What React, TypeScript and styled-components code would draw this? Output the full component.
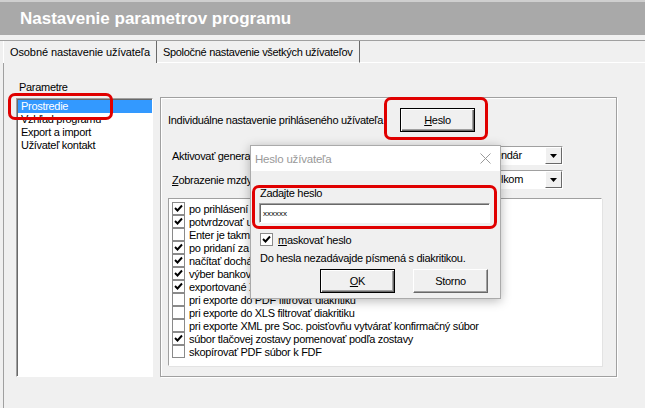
import React from 'react'
import styled, { createGlobalStyle, css } from 'styled-components'

const GlobalStyle = createGlobalStyle`
  html, body {
    margin: 0;
    padding: 0;
    background: #f0f0f0;
  }

  body {
    font-family: "Liberation Sans", Arial, sans-serif;
    font-size: 11px;
    letter-spacing: -0.3px;
    color: #000;
  }
`

const Page = styled.div`
  position: relative;
  width: 645px;
  height: 408px;
  overflow: hidden;
  background: #f0f0f0;
`

const Header = styled.div`
  height: 33px;
  border-top: 2px solid #cfcfcf;
  background: #a9a9a9;
  display: flex;
  align-items: center;
  padding-left: 20px;
`

const Title = styled.h1`
  margin: 0;
  font-family: "Liberation Sans", Arial, sans-serif;
  font-size: 17px;
  font-weight: 700;
  letter-spacing: 0;
  color: #fff;
`

const TabStrip = styled.div`
  display: flex;
  margin-top: 5px;
  height: 22px;
  border-top: 1px solid #a0a0a0;
  padding-left: 3px;
`

const Tab = styled.div<{ active?: boolean }>`
  height: 22px;
  line-height: 22px;
  padding: 0 6px;
  letter-spacing: -0.1px;
  border-left: 1px solid #fff;
  border-right: 1px solid #696969;
  white-space: nowrap;
  ${(p) => !p.active && css`
    letter-spacing: -0.3px;
    border-left: none;
    border-bottom: 1px solid #fff;
    height: 21px;
  `}
`

const TabFill = styled.div`
  flex: 1;
  border-bottom: 1px solid #fff;
`

const Panel = styled.div`
  display: flex;
  margin-left: 3px;
  height: 345px;
  border-left: 1px solid #a0a0a0;
`

const LeftCol = styled.div`
  padding: 18px 0 0 12px;
`

const Caption = styled.div`
  line-height: 13px;
  padding-left: 3px;
  margin-bottom: 4px;
`

const ListBox = styled.div`
  width: 135px;
  height: 276px;
  background: #fff;
  border: 1px solid;
  border-color: #a0a0a0 #fff #fff #a0a0a0;
  box-shadow: inset 1px 1px 0 #696969;
  padding-top: 1px;
`

const ListItem = styled.div<{ selected?: boolean }>`
  line-height: 13px;
  padding-left: 3px;
  margin-left: 1px;
  ${(p) => p.selected && css`
    background: #3399ff;
    color: #fff;
  `}
`

const GroupBox = styled.div`
  margin: 34px 0 0 7px;
  width: 436px;
  height: 268px;
  padding: 10px 12px 0 7px;
  border: 1px solid #a0a0a0;
  box-shadow: 1px 1px 0 #fff, inset 1px 1px 0 #fff;
`

const UserRow = styled.div`
  display: flex;
  align-items: center;
  height: 24px;
`

const UserLabel = styled.span`
  width: 232px;
`

const WinButton = styled.button<{ primary?: boolean }>`
  width: 75px;
  height: 24px;
  padding: 0;
  font: inherit;
  letter-spacing: inherit;
  color: #000;
  background: #f0f0f0;
  border: 1px solid #fff;
  border-right-color: #696969;
  border-bottom-color: #696969;
  box-shadow: inset -1px -1px 0 #a0a0a0;
  ${(p) => p.primary && css`
    border: 1px solid #000;
    box-shadow: inset 1px 1px 0 #fff, inset -1px -1px 0 #696969, inset -2px -2px 0 #a0a0a0;
  `}
`

const FieldRow = styled.div<{ gap: number }>`
  display: flex;
  align-items: center;
  height: 19px;
  margin-top: ${(p) => p.gap}px;
  padding-left: 4px;
`

const FieldLabel = styled.span`
  flex: 1;
  white-space: nowrap;
`

const Combo = styled.div<{ width: number }>`
  display: flex;
  width: ${(p) => p.width}px;
  height: 17px;
  margin-right: 41px;
  background: #fff;
  border: 1px solid;
  border-color: #a0a0a0 #fff #fff #a0a0a0;
`

const ComboText = styled.span`
  flex: 1;
  line-height: 17px;
  padding-left: 3px;
  overflow: hidden;
  white-space: nowrap;
`

const ComboArrow = styled.span`
  width: 15px;
  height: 15px;
  display: flex;
  align-items: center;
  justify-content: center;
  background: #f0f0f0;
  border: 1px solid;
  border-color: #fff #696969 #696969 #fff;
`

const CheckList = styled.div`
  margin-top: 9px;
  width: 429px;
  height: 163px;
  padding: 3px 0 0 3px;
  background: #fff;
  border: 1px solid;
  border-color: #a0a0a0 #fff #fff #a0a0a0;
  box-shadow: 1px 1px 0 #e3e3e3;
`

const CheckRow = styled.div`
  display: flex;
  align-items: center;
  height: 13px;
  gap: 4px;
  white-space: nowrap;
`

const Box = styled.span`
  flex: none;
  width: 11px;
  height: 11px;
  display: flex;
  align-items: center;
  justify-content: center;
  background: #fff;
  border: 1px solid #8a8a8a;
`

const Dialog = styled.div`
  position: absolute;
  left: 250px;
  top: 145px;
  width: 249px;
  height: 152px;
  background: #f0f0f0;
  border: 1px solid #aaaaaa;
  box-shadow: 0 2px 10px rgba(0, 0, 0, 0.28);
`

const DialogBar = styled.div`
  display: flex;
  align-items: center;
  justify-content: space-between;
  height: 25px;
  padding: 0 9px 0 4px;
  background: #fff;
`

const DialogTitle = styled.span`
  font-size: 11.5px;
  color: #999;
  letter-spacing: -0.2px;
`

const DialogBody = styled.div`
  padding: 16px 0 0 8px;
`

const FieldCaption = styled.div`
  line-height: 13px;
  padding-left: 1px;
`

const PasswordInput = styled.div`
  margin-top: 3px;
  width: 226px;
  height: 18px;
  display: flex;
  align-items: center;
  padding-left: 3px;
  background: #fff;
  border: 1px solid;
  border-color: #a0a0a0 #fff #fff #a0a0a0;
  box-shadow: inset 1px 1px 0 #696969;
  font-size: 8px;
  letter-spacing: 0;
`

const MaskRow = styled(CheckRow)`
  margin-top: 10px;
  padding-left: 1px;
  gap: 5px;
`

const Hint = styled.div`
  margin-top: 6px;
  line-height: 13px;
  padding-left: 1px;
`

const ButtonRow = styled.div`
  display: flex;
  gap: 18px;
  margin-top: 4px;
  padding-left: 61px;
`

const Highlight = styled.div<{ x: number; y: number; w: number; h: number }>`
  position: absolute;
  left: ${(p) => p.x}px;
  top: ${(p) => p.y}px;
  width: ${(p) => p.w - 6}px;
  height: ${(p) => p.h - 6}px;
  border: 3px solid #e00000;
  border-radius: 7px;
`

const Check = () => (
  <svg width="9" height="9" viewBox="0 0 9 9">
    <polyline points="1,4 3.5,6.5 8,1.5" fill="none" stroke="#000" strokeWidth="1.9" />
  </svg>
)

const DownArrow = () => (
  <svg width="7" height="4" viewBox="0 0 7 4">
    <polygon points="0,0 7,0 3.5,4" fill="#000" />
  </svg>
)

const CloseIcon = () => (
  <svg width="11" height="11" viewBox="0 0 11 11">
    <path d="M0.5 0.5 L10.5 10.5 M10.5 0.5 L0.5 10.5" stroke="#9a9a9a" strokeWidth="1" />
  </svg>
)

// texty čiastočne zakryté dialógom sú len v rozsahu, ktorý je vidieť
const options: [boolean, string][] = [
  [true, 'po prihlásení'],
  [true, 'potvrdzovať u'],
  [false, 'Enter je takme'],
  [true, 'po pridaní za'],
  [true, 'načítať dochá'],
  [true, 'výber bankov'],
  [true, 'exportované X'],
  [false, 'pri exporte do PDF filtrovať diakritiku'],
  [false, 'pri exporte do XLS filtrovať diakritiku'],
  [false, 'pri exporte XML pre Soc. poisťovňu vytvárať konfirmačný súbor'],
  [true, 'súbor tlačovej zostavy pomenovať podľa zostavy'],
  [false, 'skopírovať PDF súbor k FDF'],
]

const App = () => (
  <Page>
    <GlobalStyle />
    <Header>
      <Title>Nastavenie parametrov programu</Title>
    </Header>
    <TabStrip>
      <Tab active>Osobné nastavenie užívateľa</Tab>
      <Tab>Spoločné nastavenie všetkých užívateľov</Tab>
      <TabFill />
    </TabStrip>
    <Panel>
      <LeftCol>
        <Caption>Parametre</Caption>
        <ListBox>
          <ListItem selected>Prostredie</ListItem>
          <ListItem>Vzhľad programu</ListItem>
          <ListItem>Export a import</ListItem>
          <ListItem>Užívateľ kontakt</ListItem>
        </ListBox>
      </LeftCol>
      <GroupBox>
        <UserRow>
          <UserLabel>Individuálne nastavenie prihláseného užívateľa</UserLabel>
          <WinButton primary type="button"><u>H</u>eslo</WinButton>
        </UserRow>
        <FieldRow gap={14}>
          <FieldLabel>Aktivovať genera</FieldLabel>
          <Combo width={83}>
            <ComboText>kalendár</ComboText>
            <ComboArrow><DownArrow /></ComboArrow>
          </Combo>
        </FieldRow>
        <FieldRow gap={5}>
          <FieldLabel><u>Z</u>obrazenie mzdy</FieldLabel>
          <Combo width={75}>
            <ComboText>celkom</ComboText>
            <ComboArrow><DownArrow /></ComboArrow>
          </Combo>
        </FieldRow>
        <CheckList>
          {options.map(([checked, text]) => (
            <CheckRow key={text}>
              <Box>{checked ? <Check /> : null}</Box>
              <span>{text}</span>
            </CheckRow>
          ))}
        </CheckList>
      </GroupBox>
    </Panel>

    <Dialog>
      <DialogBar>
        <DialogTitle>Heslo užívateľa</DialogTitle>
        <CloseIcon />
      </DialogBar>
      <DialogBody>
        <FieldCaption>Zadajte heslo</FieldCaption>
        <PasswordInput>xxxxxx</PasswordInput>
        <MaskRow>
          <Box><Check /></Box>
          <span><u>m</u>askovať heslo</span>
        </MaskRow>
        <Hint>Do hesla nezadávajde písmená s diakritikou.</Hint>
        <ButtonRow>
          <WinButton primary type="button"><u>O</u>K</WinButton>
          <WinButton type="button">Storno</WinButton>
        </ButtonRow>
      </DialogBody>
    </Dialog>

    <Highlight x={8} y={93} w={105} h={27} />
    <Highlight x={384} y={97} w={104} h={43} />
    <Highlight x={252} y={185} w={245} h={44} />
  </Page>
)

export default App
